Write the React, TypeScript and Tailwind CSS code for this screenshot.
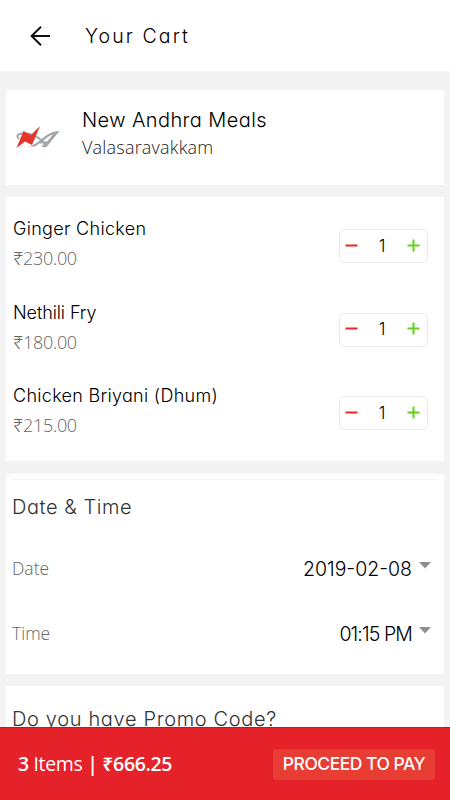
import { useState } from "react";

type CartItem = {
  name: string;
  nameClass: string;
  price: string;
};

const cartItems: CartItem[] = [
  { name: "Ginger Chicken", nameClass: "tracking-[0.3px]", price: "₹230.00" },
  { name: "Nethili Fry", nameClass: "tracking-[-0.1px]", price: "₹180.00" },
  { name: "Chicken Briyani (Dhum)", nameClass: "tracking-[0.3px]", price: "₹215.00" },
];

const headingFont =
  "font-['Inter','Liberation_Sans',sans-serif] font-light [font-feature-settings:'cv11']";
const bodyFont = "font-['Open_Sans','Noto_Sans',sans-serif]";

function BackArrow() {
  return (
    <svg width="20" height="20" viewBox="0 0 20 20" fill="none" stroke="#111" strokeWidth="2">
      <path d="M20 10H1.6M11 0.8L1.6 10l9.4 9.2" />
    </svg>
  );
}

function RestaurantLogo() {
  return (
    <svg width="44" height="24" viewBox="0 0 44 24">
      <path
        d="M3 13C-1 9 3 7.2 9 7.4C17 7.7 23 11 28 17"
        fill="none"
        stroke="#a3a7aa"
        strokeWidth="2"
      />
      <path
        d="M43.5 5L30.5 21H25.5L28 17.5H23L19 20.5H12.5C18 19.5 22 15.5 27 12C31 8.5 35 5.5 43.5 5ZM37 8.5C33 10 29.5 12 26.5 15.5H31Z"
        fill="#a3a7aa"
        fillRule="evenodd"
      />
      <path d="M24 0L16 19L9 15.5L0.5 22L7.5 5L15 9Z" fill="#e5352c" />
    </svg>
  );
}

function QuantityStepper() {
  const [quantity, setQuantity] = useState(1);

  return (
    <div className="mt-[3px] flex h-[34px] w-[89px] items-center justify-between rounded-[5px] border border-[#e9e9e9] pr-[7px] pl-[5px]">
      <button
        type="button"
        aria-label="Remove one"
        className="pb-[2px]"
        onClick={() => setQuantity((current) => Math.max(0, current - 1))}
      >
        <svg width="13" height="13" viewBox="0 0 13 13" stroke="#ee2225" strokeWidth="2">
          <path d="M0.5 6.5h12" />
        </svg>
      </button>
      <span className={`${headingFont} pr-px text-[17px] leading-none text-black`}>
        {quantity}
      </span>
      <button
        type="button"
        aria-label="Add one"
        className="pb-[2px]"
        onClick={() => setQuantity((current) => current + 1)}
      >
        <svg width="13" height="13" viewBox="0 0 13 13" stroke="#5fd41b" strokeWidth="2">
          <path d="M0.5 6.5h12M6.5 0.5v12" />
        </svg>
      </button>
    </div>
  );
}

function PickerRow({
  label,
  value,
  valueClass,
}: {
  label: string;
  value: string;
  valueClass: string;
}) {
  return (
    <div className="flex h-[65px] items-center justify-between pr-[7px]">
      <span className={`${bodyFont} -mt-[2px] text-[17.5px] font-light text-[#666]`}>{label}</span>
      <button type="button" className="flex items-center gap-[7px]">
        <span className={`${headingFont} text-[19.5px] text-black ${valueClass}`}>{value}</span>
        <svg className="mb-[8px]" width="12" height="7" viewBox="0 0 12 7" fill="#8e8e8e">
          <path d="M0 0h12L6 6.5z" />
        </svg>
      </button>
    </div>
  );
}

export default function App() {
  return (
    <div className="flex h-[800px] w-[450px] flex-col overflow-hidden bg-[#f3f3f3]">
      <header className="flex h-[71px] shrink-0 items-center gap-[35px] bg-white pl-[30px]">
        <button type="button" aria-label="Back">
          <BackArrow />
        </button>
        <h1 className={`${headingFont} pt-[2px] text-[19.5px] tracking-[2.1px] text-black`}>
          Your Cart
        </h1>
      </header>

      <main className="flex min-h-0 flex-1 flex-col overflow-hidden px-[6px] pt-[19px]">
        <section className="flex h-[95px] shrink-0 bg-white pt-[15px] pl-[10px]">
          <div className="mt-[21px] h-6 w-11">
            <RestaurantLogo />
          </div>
          <div className="ml-[22px]">
            <h2
              className={`${headingFont} text-[20px] leading-[31px] tracking-[0.4px] text-black`}
            >
              New Andhra Meals
            </h2>
            <p className={`${bodyFont} text-[18px] leading-[23px] font-light tracking-[0.2px] text-[#222]`}>
              Valasaravakkam
            </p>
          </div>
        </section>

        <section className="mt-[12px] flex h-[264px] shrink-0 flex-col bg-white pt-[29px] pr-4 pl-[7px]">
          {cartItems.map((item) => (
            <div key={item.name} className="flex h-[83.5px] shrink-0 justify-between">
              <div className="-mt-[10px]">
                <h3
                  className={`${headingFont} text-[18px] leading-[26px] text-black ${item.nameClass}`}
                >
                  {item.name}
                </h3>
                <p
                  className={`${bodyFont} mt-[2px] text-[18px] leading-7 font-light tracking-[-0.3px] text-[#666]`}
                >
                  {item.price}
                </p>
              </div>
              <QuantityStepper />
            </div>
          ))}
        </section>

        <section className="mt-[13px] h-[200px] shrink-0 bg-white px-[6px] pt-[5px]">
          <div className="border-t border-[#f3f3f3] pt-[12px]">
            <h2
              className={`${headingFont} text-[20px] leading-[30px] tracking-[0.55px] text-[#333]`}
            >
              Date &amp; Time
            </h2>
            <div className="mt-[15px]">
              <PickerRow label="Date" value="2019-02-08" valueClass="" />
              <PickerRow label="Time" value="01:15 PM" valueClass="tracking-[-0.9px]" />
            </div>
          </div>
        </section>

        <section className="mt-[12px] h-[100px] shrink-0 bg-white pt-[18px] pl-[6px]">
          <h2
            className={`${headingFont} text-[20px] leading-[30px] tracking-[0.65px] text-[#333]`}
          >
            Do you have Promo Code?
          </h2>
        </section>
      </main>

      <footer className="flex h-[73px] shrink-0 items-center justify-between border-t border-[#e30b12] bg-[#e52129] pr-[15px] pl-[18px] text-white">
        <p className={`${bodyFont} text-[19.5px] tracking-[-0.35px]`}>
          <span className="font-semibold">3</span> Items{" "}
          <span className="font-semibold">| ₹666.25</span>
        </p>
        <button
          type="button"
          className={`${headingFont} h-[31px] w-[162px] rounded-[3px] bg-[#e73d33] text-[17.5px] leading-none font-medium tracking-[-0.5px] whitespace-nowrap`}
        >
          PROCEED TO PAY
        </button>
      </footer>
    </div>
  );
}
